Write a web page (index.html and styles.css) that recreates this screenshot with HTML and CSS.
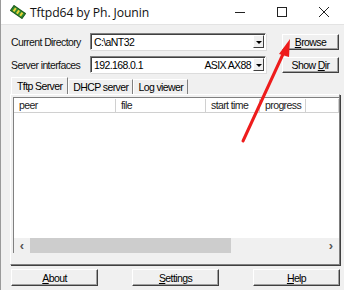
FILE: index.html
```html
<!DOCTYPE html>
<html>
<head>
<meta charset="utf-8">
<link rel="stylesheet" href="styles.css">
</head>
<body>
<div class="window">
  <div class="titlebar">
    <svg class="app-icon" width="16" height="14" viewBox="0 0 16 14">
      <g transform="rotate(35 8 7)">
        <rect x="1" y="4" width="14" height="6" fill="#2f8a2f" stroke="#1c5a1c" stroke-width="1"/>
        <rect x="3" y="5" width="2" height="4" fill="#e8d23a"/>
        <rect x="7" y="5" width="2" height="4" fill="#e8d23a"/>
        <rect x="11" y="5" width="2" height="4" fill="#e8d23a"/>
      </g>
    </svg>
    <span class="title">Tftpd64 by Ph. Jounin</span>
    <div class="controls">
      <svg width="12" height="12" viewBox="0 0 12 12"><line x1="1" y1="6.5" x2="11" y2="6.5" stroke="#222" stroke-width="1"/></svg>
      <svg width="12" height="12" viewBox="0 0 12 12"><rect x="1.5" y="1.5" width="9" height="9" fill="none" stroke="#222" stroke-width="1"/></svg>
      <svg width="12" height="12" viewBox="0 0 12 12"><path d="M1 1 L11 11 M11 1 L1 11" stroke="#222" stroke-width="1"/></svg>
    </div>
  </div>

  <div class="client">
    <div class="form-row">
      <span class="label">Current Directory</span>
      <div class="combo"><span class="combo-text">C:\aNT32</span><span class="drop"><i class="tri"></i></span></div>
      <button class="btn small"><u>B</u>rowse</button>
    </div>
    <div class="form-row second">
      <span class="label">Server interfaces</span>
      <div class="combo"><span class="combo-text">192.168.0.1</span><span class="combo-right">ASIX AX88</span><span class="drop"><i class="tri"></i></span></div>
      <button class="btn small">Show <u>D</u>ir</button>
    </div>

    <div class="tabs">
      <span class="tab active">Tftp Server</span>
      <span class="tab">DHCP server</span>
      <span class="tab">Log viewer</span>
    </div>
    <div class="pane">
      <div class="list">
        <div class="header">
          <span class="col c1">peer</span>
          <span class="col c2">file</span>
          <span class="col c3">start time</span>
          <span class="col c4">progress</span>
          <span class="col c5"></span>
        </div>
        <div class="list-body"></div>
        <div class="hscroll">
          <span class="arrow">&#8249;</span>
          <span class="thumb"></span>
          <span class="track"></span>
          <span class="arrow">&#8250;</span>
        </div>
      </div>
    </div>

    <div class="bottom">
      <button class="btn wide"><u>A</u>bout</button>
      <button class="btn wide"><u>S</u>ettings</button>
      <button class="btn wide"><u>H</u>elp</button>
    </div>
  </div>

  <svg class="red-arrow" width="344" height="290" viewBox="0 0 344 290">
    <line x1="243" y1="141" x2="284" y2="52" stroke="#ee1c1c" stroke-width="3" stroke-linecap="round"/>
    <polygon points="290,39 279,54 289,57" fill="#ee1c1c"/>
  </svg>
</div>
</body>
</html>
```

FILE: styles.css
```css
* { box-sizing: border-box; }
html, body { margin: 0; padding: 0; }
body {
  width: 344px;
  height: 290px;
  overflow: hidden;
  background: #f0f0f0;
  font-family: "Liberation Sans", Arial, sans-serif;
  font-size: 10.5px;
  letter-spacing: -0.6px;
  white-space: nowrap;
  color: #000;
}
.window {
  position: relative;
  width: 344px;
  height: 290px;
  border-left: 1px solid #9a9a9a;
  display: flex;
  flex-direction: column;
}
.titlebar {
  height: 25px;
  background: #fff;
  border-bottom: 1px solid #e3e3e3;
  display: flex;
  align-items: center;
  padding-left: 9px;
}
.app-icon { margin-right: 4px; margin-top: -1px; }
.title {
  font-family: "Open Sans", "Noto Sans", sans-serif;
  font-size: 12.2px;
  color: #111;
  letter-spacing: -0.1px;
}
.controls {
  margin-left: auto;
  display: flex;
  gap: 30px;
  padding-right: 14px;
  align-items: center;
}
.client {
  display: flex;
  flex-direction: column;
  padding: 8px 4px 0 9px;
  flex: 1;
}
.form-row {
  display: flex;
  align-items: center;
  height: 17px;
}
.form-row.second { margin-top: 6px; }
.label {
  width: 80px;
  padding-left: 1px;
  color: #111;
}
.combo {
  width: 176px;
  height: 17px;
  background: #fff;
  border-top: 1px solid #808080;
  border-left: 1px solid #808080;
  border-right: 1px solid #fff;
  border-bottom: 1px solid #fff;
  box-shadow: inset 1px 1px 0 #404040, 1px 1px 0 #dcdcdc;
  display: flex;
  align-items: center;
  padding-left: 3px;
}
.combo-right { margin-left: auto; margin-right: 2px; }
.combo-text + .drop { margin-left: auto; }
.drop {
  width: 11px;
  height: 13px;
  margin-right: 1px;
  background: #f0f0f0;
  border-top: 1px solid #fff;
  border-left: 1px solid #fff;
  border-right: 1px solid #404040;
  border-bottom: 1px solid #404040;
  display: flex;
  align-items: center;
  justify-content: center;
}
.tri {
  width: 0; height: 0;
  border-left: 3px solid transparent;
  border-right: 3px solid transparent;
  border-top: 3px solid #000;
  margin-top: 1px;
}
.btn {
  font-family: "Liberation Sans", Arial, sans-serif;
  font-size: 10.5px;
  letter-spacing: -0.6px;
  color: #000;
  background: #f0f0f0;
  border-top: 1px solid #fff;
  border-left: 1px solid #fff;
  border-right: 1px solid #404040;
  border-bottom: 1px solid #404040;
  box-shadow: inset -1px -1px 0 #a0a0a0;
  padding: 0;
}
.btn.small {
  width: 57px;
  height: 16px;
  margin-left: 16px;
}
.tabs {
  display: flex;
  align-items: flex-end;
  margin-top: 4px;
  height: 17px;
  padding-left: 1px;
}
.tab {
  height: 15px;
  padding: 0 4px;
  border-top: 1px solid #fff;
  border-left: 1px solid #fff;
  border-right: 1px solid #808080;
  display: flex;
  align-items: center;
}
.tab.active {
  height: 17px;
  padding: 0 5px;
  position: relative;
}
.pane {
  height: 171px;
  border-top: 1px solid #fff;
  border-left: 1px solid #fff;
  border-right: 1px solid #808080;
  border-bottom: 1px solid #808080;
  box-shadow: 1px 1px 0 #404040;
  padding: 2px 0 11px 2px;
  display: flex;
}
.list {
  flex: 1;
  background: #fff;
  border-top: 1px solid #808080;
  border-left: 1px solid #808080;
  display: flex;
  flex-direction: column;
}
.header {
  display: flex;
  height: 15px;
  background: #fff;
  border-top: 1px solid #fff;
}
.col {
  height: 14px;
  border-right: 1px solid #d0d0d0;
  border-bottom: 1px solid #d0d0d0;
  padding-left: 5px;
  line-height: 13px;
  color: #222;
}
.c1 { width: 102px; }
.c2 { width: 90px; }
.c3 { width: 54px; }
.c4 { width: 46px; }
.c5 { flex: 1; }
.list-body { flex: 1; }
.hscroll {
  height: 15px;
  display: flex;
  align-items: center;
  background: #f0f0f0;
}
.arrow {
  width: 16px;
  text-align: center;
  font-size: 13px;
  letter-spacing: 0;
  line-height: 15px;
  color: #555;
  font-weight: bold;
}
.thumb {
  width: 201px;
  height: 15px;
  background: #cdcdcd;
}
.track { flex: 1; }
.bottom {
  display: flex;
  justify-content: space-between;
  margin-top: 4px;
}
.btn.wide {
  width: 87px;
  height: 17px;
  margin-left: 1px;
}
.red-arrow {
  position: absolute;
  left: -1px;
  top: 0;
  pointer-events: none;
}
```
